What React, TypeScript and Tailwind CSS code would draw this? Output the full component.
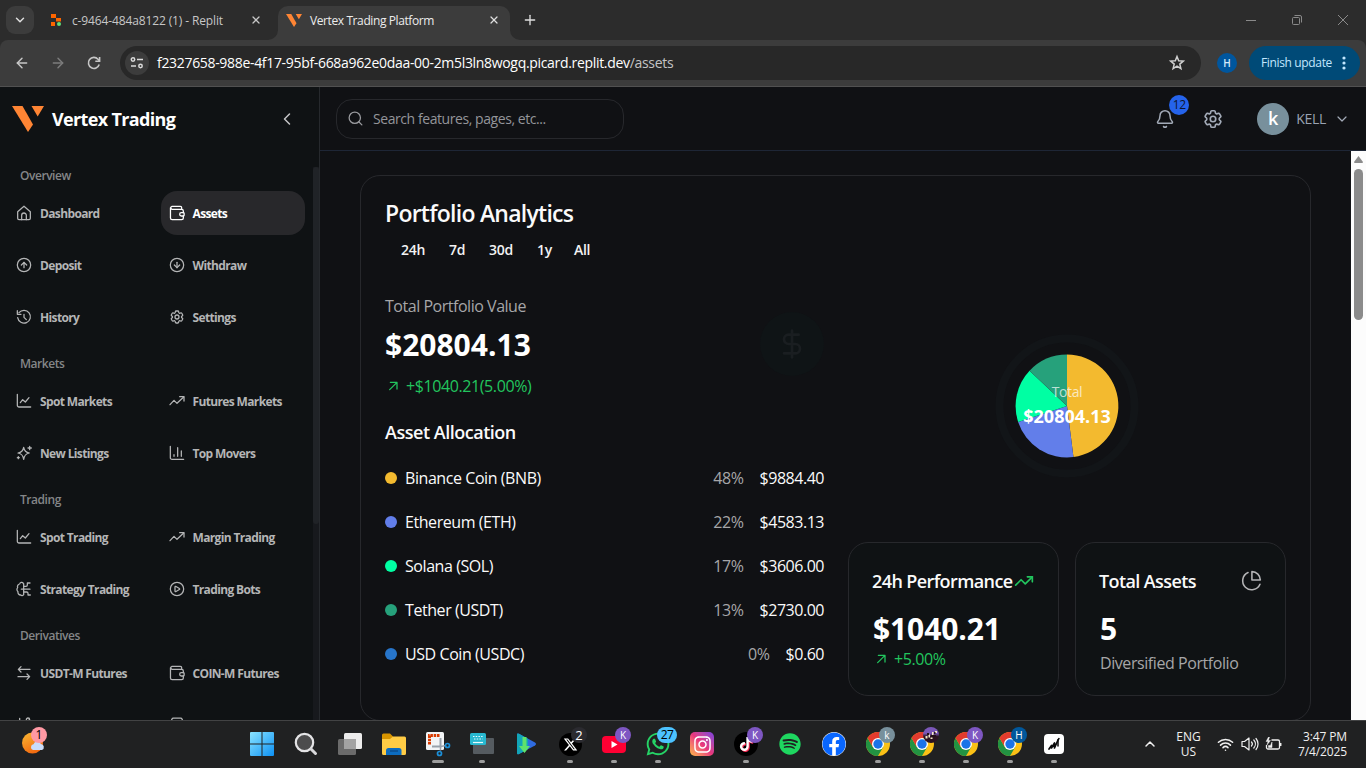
import type { ReactNode } from "react";
import {
  ArrowLeft,
  ArrowRight,
  Bell,
  ChevronDown,
  ChevronLeft,
  ChevronUp,
  CircleArrowDown,
  CircleArrowUp,
  CirclePlay,
  DollarSign,
  Plus,
  Search,
  TrendingUp,
  Wifi,
  X,
} from "lucide-react";
import { FaInstagram, FaSpotify, FaTiktok, FaWhatsapp, FaFacebook } from "react-icons/fa";
import { FaXTwitter } from "react-icons/fa6";
import { HiOutlineCog6Tooth } from "react-icons/hi2";

/* ---------- small line icons ---------- */

function Line({ children, size = 16, sw = 1.9 }: { children: ReactNode; size?: number; sw?: number }) {
  return (
    <svg width={size} height={size} viewBox="0 0 24 24" fill="none" stroke="currentColor" strokeWidth={sw} strokeLinecap="round" strokeLinejoin="round" className="shrink-0">
      {children}
    </svg>
  );
}
const HomeIcon = () => (
  <Line>
    <path d="M2.500 10 12 1.800l9.500 8.200V20a2 2 0 0 1-2 2h-15a2 2 0 0 1-2-2Z" />
    <path d="M8.500 22v-6.500a3.500 3.500 0 0 1 7 0V22" />
  </Line>
);
const WalletIcon = () => (
  <Line>
    <path d="M21.500 11.500V9a2.500 2.500 0 0 0-2.500-2.500H4.500A2.300 2.300 0 0 1 4.500 2H17a2 2 0 0 1 2 2v2.500" />
    <path d="M2.200 4.300V19.500A2.500 2.500 0 0 0 4.700 22H19a2.500 2.500 0 0 0 2.500-2.500v-3" />
    <path d="M21.500 11.500h-3a2.500 2.500 0 0 0 0 5h3a1.200 1.200 0 0 0 1.200-1.200v-2.600a1.200 1.200 0 0 0-1.200-1.200Z" />
  </Line>
);
const HistoryIcon = () => (
  <Line>
    <path d="M4.500 5.500A9.600 9.600 0 1 1 2.500 13" />
    <path d="M2 2.500v5.500h5.500" />
    <path d="M12 8v4.500l3.500 3.500" />
  </Line>
);
const LineChartIcon = () => (
  <Line>
    <path d="M2 2v16.500A2.500 2.500 0 0 0 4.500 21H22" />
    <path d="M6.500 14.500 10 10l4 3.500L19.500 7" />
  </Line>
);
const TrendIcon = () => (
  <Line>
    <path d="M1.500 17.500 7.500 11l4.500 4.500L22 6" />
    <path d="M16 5.500h6.500V12" />
  </Line>
);
const SparkIcon = () => (
  <Line>
    <path d="M11.500 3.500c1 5.500 3 7.500 8.500 8.500-5.500 1-7.500 3-8.500 9.500C10.500 15 8.500 13 3 12c5.500-1 7.500-3 8.500-8.500Z" />
    <path d="M20.500 2v5M18 4.500h5M3.500 17.500v3M2 19h3" />
  </Line>
);
const BarsIcon = () => (
  <Line>
    <path d="M2 2v17a2.500 2.500 0 0 0 2.500 2.500H22" />
    <path d="M7.500 17v-2.500M13 17V4M18.500 17V9" />
  </Line>
);
const BrainIcon = () => (
  <Line>
    <path d="M11 3.500A3 3 0 0 0 5.500 4.500 4 4 0 0 0 2.500 10a4 4 0 0 0 .500 6A4 4 0 0 0 7 21 3 3 0 0 0 11.500 20.500V4" />
    <path d="M11.500 8H15a2 2 0 0 0 2-2V3h4M8 12.200H21M11.500 16.500H16a2 2 0 0 1 2 2V21h3.500" />
  </Line>
);
const SwapIcon = () => (
  <Line>
    <path d="M21 6.500H4M7.500 2.500 3.500 6.500l4 4M3 17.500h17M16.500 13.500l4 4-4 4" />
  </Line>
);
const PieIcon = () => (
  <Line size={22} sw={1.7}>
    <path d="M13 1.800v9.200h9.200A9.200 9.200 0 0 0 13 1.800Z" />
    <path d="M8.800 2.800A9.800 9.800 0 1 0 21.800 15.500" />
  </Line>
);
const PercentIcon = () => (
  <Line>
    <path d="M4 20 20 4M5.500 2v4" />
    <circle cx="18" cy="4" r="2.500" />
  </Line>
);
const ShieldIcon = () => (
  <Line>
    <path d="M2.500 8 4.500 3Q5 1.800 6.500 1.800h11q1.500 0 2 1.200L21.500 8 12 22Z" />
  </Line>
);
const VLogo = ({ w, h }: { w: number; h: number }) => (
  <svg width={w} height={h} viewBox="0 0 32 26" preserveAspectRatio="none" fill="#ff8534" className="shrink-0">
    <path d="M0 0h10.500L21 18.500 16 26Z" />
    <path d="M19.500 0H32l-6.300 10.500Z" />
  </svg>
);

/* ---------- browser chrome ---------- */

function Browser() {
  return (
    <header className="h-[87px] shrink-0 bg-[#2c2c2c] text-[#dfdfdf]">
      <div className="flex h-10 items-start">
        <div className="mt-[6px] ml-[6px] flex size-7 items-center justify-center rounded-[9px] bg-[#3c3c3c]">
          <ChevronDown size={14} strokeWidth={2.5} />
        </div>
        <div className="flex h-10 w-[234px] items-center pl-[16px]">
          <svg width="12" height="12" viewBox="0 0 12 12" className="shrink-0">
            <path d="M1 0h5v4H1zM6 4h5v3.500H6zM1 8h4v4H1z" fill="#fc6500" />
            <circle cx="9" cy="10" r="2" fill="#5fe07a" />
          </svg>
          <span className="ml-[10px] w-[178px] pt-px text-xs tracking-[-0.13px] whitespace-nowrap text-[#c7c7c7]">c-9464-484a8122 (1) - Replit</span>
          <X size={12} strokeWidth={2.5} className="shrink-0 text-[#c7c7c7]" />
        </div>
        <svg width="10" height="10" viewBox="0 0 10 10" className="mt-[30px] shrink-0" fill="#3c3c3c">
          <path d="M10 0v10H0A10 10 0 0 0 10 0Z" />
        </svg>
        <div className="mt-[6px] flex h-[34px] w-[232px] items-center rounded-t-[10px] bg-[#3c3c3c] pb-[6px] pl-[8px]">
          <VLogo w={16} h={13} />
          <span className="ml-[8px] w-[178px] pt-px text-xs tracking-[-0.4px] whitespace-nowrap text-[#ececec]">Vertex Trading Platform</span>
          <X size={12} strokeWidth={2.5} className="shrink-0" />
        </div>
        <svg width="10" height="10" viewBox="0 0 10 10" className="mt-[30px] shrink-0" fill="#3c3c3c">
          <path d="M0 0v10h10A10 10 0 0 1 0 0Z" />
        </svg>
        <div className="flex h-10 items-center pl-[2px]">
          <Plus size={16} strokeWidth={2} />
        </div>
        <div className="mr-[18px] ml-auto flex h-10 items-center gap-[36px] text-[#8a8a8a]">
          <span className="h-px w-[10px] bg-[#8a8a8a]" />
          <svg width="10" height="10" viewBox="0 0 10 10" fill="none" stroke="currentColor">
            <rect x=".5" y="2.500" width="7" height="7" rx="1" />
            <path d="M2.500.5H8A1.500 1.500 0 0 1 9.500 2v5.500" />
          </svg>
          <svg width="10" height="10" viewBox="0 0 10 10" fill="none" stroke="currentColor">
            <path d="m0 0 10 10M10 0 0 10" />
          </svg>
        </div>
      </div>
      <div className="flex h-[47px] items-center rounded-t-[8px] border-b border-[#515151] bg-[#3c3c3c] pr-[6px] pl-[14px]">
        <ArrowLeft size={16} strokeWidth={2.2} className="text-[#c7c7c7]" />
        <ArrowRight size={16} strokeWidth={2.2} className="ml-[20px] text-[#7c7c7c]" />
        <svg width="16" height="16" viewBox="0 0 16 16" fill="none" stroke="#c7c7c7" strokeWidth="1.600" className="ml-[20px]">
          <path d="M13.200 9.500A5.500 5.500 0 1 1 12 4.200L13.500 6" />
          <path d="M13.600 2v4.300H9.300" />
        </svg>
        <div className="ml-[18px] flex h-[34px] w-[1081px] items-center rounded-full bg-[#282828] pr-[15px] pl-[5px]">
          <span className="flex size-6 items-center justify-center rounded-full bg-[#3c3c3c]">
            <svg width="14" height="14" viewBox="0 0 14 14" fill="none" stroke="#dadada" strokeWidth="1.500">
              <circle cx="3" cy="3.500" r="1.700" />
              <path d="M7 3.500h6M1 10h5" />
              <circle cx="10.500" cy="10" r="1.700" />
            </svg>
          </span>
          <span className="ml-2 text-sm tracking-[-0.32px] whitespace-nowrap text-white">
            f2327658-988e-4f17-95bf-668a962e0daa-00-2m5l3ln8wogq.picard.replit.dev<span className="text-[#c4c4c4]">/assets</span>
          </span>
          <svg width="18" height="18" viewBox="0 0 18 18" fill="none" stroke="#d0d0d0" strokeWidth="1.500" className="ml-auto">
            <path d="m9 2.500 1.700 4.300 4.600.3-3.500 3 1.100 4.500L9 12.200l-3.900 2.400 1.100-4.500-3.500-3 4.600-.3Z" />
          </svg>
        </div>
        <span className="ml-[16px] flex size-5 items-center justify-center rounded-full bg-[#00569e] text-[10px] font-semibold text-[#d5e9fa]">H</span>
        <div className="ml-[12px] flex h-[34px] w-[111px] items-center rounded-full bg-[#004a77] pl-[12px] text-[#c2e7ff]">
          <span className="w-[81px] text-xs tracking-[-0.35px] whitespace-nowrap">Finish update</span>
          <svg width="4" height="14" viewBox="0 0 4 14" fill="currentColor">
            <circle cx="2" cy="2" r="1.600" />
            <circle cx="2" cy="7" r="1.600" />
            <circle cx="2" cy="12" r="1.600" />
          </svg>
        </div>
      </div>
    </header>
  );
}

/* ---------- sidebar ---------- */

const small = "size-4 shrink-0";
const sections: { title: string; items: [ReactNode, string][] }[] = [
  {
    title: "Overview",
    items: [
      [<HomeIcon />, "Dashboard"],
      [<WalletIcon />, "Assets"],
      [<CircleArrowUp className={small} strokeWidth={1.9} />, "Deposit"],
      [<CircleArrowDown className={small} strokeWidth={1.9} />, "Withdraw"],
      [<HistoryIcon />, "History"],
      [<HiOutlineCog6Tooth className={small} strokeWidth={1.9} />, "Settings"],
    ],
  },
  {
    title: "Markets",
    items: [
      [<LineChartIcon />, "Spot Markets"],
      [<TrendIcon />, "Futures Markets"],
      [<SparkIcon />, "New Listings"],
      [<BarsIcon />, "Top Movers"],
    ],
  },
  {
    title: "Trading",
    items: [
      [<LineChartIcon />, "Spot Trading"],
      [<TrendIcon />, "Margin Trading"],
      [<BrainIcon />, "Strategy Trading"],
      [<CirclePlay className={small} strokeWidth={1.9} />, "Trading Bots"],
    ],
  },
  {
    title: "Derivatives",
    items: [
      [<SwapIcon />, "USDT-M Futures"],
      [<WalletIcon />, "COIN-M Futures"],
      [<PercentIcon />, ""],
      [<ShieldIcon />, ""],
    ],
  },
];

function Sidebar() {
  return (
    <aside className="flex w-80 shrink-0 flex-col border-r border-[#26292d] bg-[#0f1214]">
      <div className="flex h-16 shrink-0 items-center pr-[22px] pl-3">
        <VLogo w={32} h={26} />
        <span className="ml-2 pt-px text-[18px] font-bold tracking-[-0.65px] whitespace-nowrap text-white">Vertex Trading</span>
        <ChevronLeft size={20} strokeWidth={1.8} className="ml-auto text-[#c4c4c6]" />
      </div>
      <div className="mt-4 flex min-h-0 flex-1 overflow-hidden">
        <nav className="flex w-[313px] flex-col gap-4 pr-2 pl-2">
          {sections.map((s) => (
            <section key={s.title} className="flex shrink-0 flex-col gap-2">
              <h3 className="h-4 pt-px pl-3 text-xs leading-4 font-semibold tracking-[-0.45px] text-[#848688]">{s.title}</h3>
              <div className="grid grid-cols-2 gap-2">
                {s.items.map(([icon, label], i) => (
                  <a
                    key={i}
                    className={
                      label === "Assets"
                        ? "flex h-11 items-center gap-2 rounded-2xl bg-[#28282b] px-2 text-white"
                        : "flex h-11 items-center gap-2 rounded-2xl px-2 text-[#b4b5b6]"
                    }
                  >
                    {icon}
                    <span className="pt-[2px] text-xs font-bold tracking-[-0.64px] whitespace-nowrap">{label}</span>
                  </a>
                ))}
              </div>
            </section>
          ))}
        </nav>
        <div className="w-[6px] bg-[#17191d]">
          <div className="h-[357px] rounded-full bg-[#202327]" />
        </div>
      </div>
    </aside>
  );
}

/* ---------- main ---------- */

function TopBar() {
  return (
    <div className="flex h-16 shrink-0 items-center border-b border-[#1e2636] pr-[16px] pl-4">
      <div className="flex h-10 w-72 items-center rounded-2xl border border-[#27282c] pl-[10px]">
        <Search size={17} strokeWidth={1.8} className="text-[#9a9b9f]" />
        <span className="ml-[9px] pt-px text-sm tracking-[-0.43px] whitespace-nowrap text-[#94959a]">Search features, pages, etc...</span>
      </div>
      <div className="relative ml-auto text-[#a3abb8]">
        <Bell size={20} strokeWidth={1.8} />
        <span className="absolute -top-[14px] left-[14px] flex size-5 items-center justify-center rounded-full bg-[#2563eb] text-xs tracking-[-0.3px] text-[#0c1530]">12</span>
      </div>
      <HiOutlineCog6Tooth className="ml-[27px] size-[22px] text-[#a3abb8]" strokeWidth={1.8} />
      <span className="ml-[33px] flex size-8 items-center justify-center rounded-full bg-[#78909c] text-[18px] font-semibold text-white">k</span>
      <span className="ml-[7px] text-sm tracking-[-0.3px] text-[#9aa3b2]">KELL</span>
      <ChevronDown size={16} strokeWidth={1.8} className="ml-[8px] text-[#a3abb8]" />
    </div>
  );
}

const assets = [
  { name: "Binance Coin (BNB)", pct: 48, value: "$9884.40", dot: "bg-[#f3ba2f]", color: "#f3ba2f" },
  { name: "Ethereum (ETH)", pct: 22, value: "$4583.13", dot: "bg-[#627eea]", color: "#627eea" },
  { name: "Solana (SOL)", pct: 17, value: "$3606.00", dot: "bg-[#00ffa3]", color: "#00ffa3" },
  { name: "Tether (USDT)", pct: 13, value: "$2730.00", dot: "bg-[#26a17b]", color: "#26a17b" },
  { name: "USD Coin (USDC)", pct: 0, value: "$0.60", dot: "bg-[#2775ca]", color: "#2775ca" },
];

const ranges: [string, string][] = [
  ["24h", "w-6"],
  ["7d", "w-4"],
  ["30d", "w-6"],
  ["1y", "w-[13px]"],
  ["All", "w-[17px]"],
];

function Pie() {
  let acc = 0;
  const at = (p: number) => {
    const a = (p / 100) * Math.PI * 2;
    return `${(72 + 51.4 * Math.sin(a)).toFixed(2)} ${(72 - 51.4 * Math.cos(a)).toFixed(2)}`;
  };
  return (
    <div className="relative size-36">
      <svg width="144" height="144" viewBox="0 0 144 144">
        <circle cx="72" cy="72" r="67.500" fill="none" stroke="#121518" strokeWidth="8" />
        {assets
          .filter((a) => a.pct > 0)
          .map((a) => {
            const start = acc;
            acc += a.pct;
            return <path key={a.name} d={`M72 72L${at(start)}A51.4 51.4 0 0 1 ${at(acc)}Z`} fill={a.color} />;
          })}
      </svg>
      <div className="absolute inset-0 flex flex-col items-center justify-center whitespace-nowrap">
        <span className="text-sm leading-5 tracking-[-0.4px] text-white/70">Total</span>
        <span className="text-[18px] leading-7 font-bold text-white">$20804.13</span>
      </div>
    </div>
  );
}

function Change({ children }: { children: ReactNode }) {
  return (
    <div className="flex h-6 items-center text-[#22c55e]">
      <Line size={16} sw={1.9}>
        <path d="M7 17.500 18 6.500M8 6.500H18v10" />
      </Line>
      <span className="ml-[5px] text-base leading-6 tracking-[-0.4px]">{children}</span>
    </div>
  );
}

function Stat({ title, icon, children }: { title: string; icon: ReactNode; children: ReactNode }) {
  return (
    <div className="h-[154px] rounded-[20px] border border-[#27282c] bg-[#0f1214] px-6 pt-6">
      <div className="flex h-7 items-center justify-between">
        <h4 className="-ml-px text-[18px] leading-7 font-semibold tracking-[-0.6px] whitespace-nowrap text-[#fafafa]">{title}</h4>
        {icon}
      </div>
      {children}
    </div>
  );
}

function Portfolio() {
  return (
    <section className="h-[546px] w-[951px] shrink-0 rounded-[20px] border border-[#27282c] px-6 pt-[23px]">
      <h1 className="text-[23px] leading-7 font-semibold tracking-[-0.75px] text-[#fafafa]">Portfolio Analytics</h1>
      <div className="mt-2 flex h-7 items-center gap-6 pl-4 text-[14px] font-semibold tracking-[-0.3px] whitespace-nowrap text-[#f2f2f3]">
        {ranges.map(([t, w]) => (
          <span key={t} className={w}>
            {t}
          </span>
        ))}
      </div>
      <div className="mt-[31px] grid grid-cols-[439px_438px] gap-x-6">
        <div>
          <div className="flex items-center justify-between">
            <div>
              <p className="h-6 text-base leading-6 tracking-[-0.47px] text-[#a6a6a8]">Total Portfolio Value</p>
              <p className="mt-2 h-9 pt-px text-[30px] leading-9 font-bold text-white">$20804.13</p>
              <div className="mt-3">
                <Change>+$1040.21(5.00%)</Change>
              </div>
            </div>
            <div className="mb-1 flex size-16 items-center justify-center rounded-full bg-[#0f1416] text-[#1a1e21]">
              <DollarSign size={32} strokeWidth={2} />
            </div>
          </div>
          <h2 className="mt-5 h-7 text-[18px] leading-[29px] font-semibold tracking-[-0.48px] text-[#fafafa]">Asset Allocation</h2>
          <ul className="mt-5 flex flex-col gap-5 text-base leading-6 text-[#fafafa]">
            {assets.map((a) => (
              <li key={a.name} className="flex h-6 items-center">
                <span className={`size-3 rounded-full ${a.dot}`} />
                <span className="ml-2 tracking-[-0.43px]">{a.name}</span>
                <span className="mr-4 ml-auto tracking-[-0.4px] text-[#a6a6a8]">{a.pct}%</span>
                <span className="tracking-[-0.48px]">{a.value}</span>
              </li>
            ))}
          </ul>
        </div>
        <div className="flex h-[402px] flex-col">
          <div className="mt-[40px] flex justify-center">
            <Pie />
          </div>
          <div className="mt-auto grid grid-cols-2 gap-4">
            <Stat title="24h Performance" icon={<TrendingUp size={20} strokeWidth={2} className="shrink-0 text-[#22c55e]" />}>
              <p className="mt-4 text-[30px] leading-9 font-bold tracking-[-0.1px] text-white">$1040.21</p>
              <Change>+5.00%</Change>
            </Stat>
            <Stat title="Total Assets" icon={<span className="-mr-px text-[#b4b4b6]"><PieIcon /></span>}>
              <p className="mt-4 text-[30px] leading-9 font-bold text-white">5</p>
              <p className="mt-1 text-base leading-6 tracking-[-0.43px] whitespace-nowrap text-[#a6a6a8]">Diversified Portfolio</p>
            </Stat>
          </div>
        </div>
      </div>
    </section>
  );
}

/* ---------- taskbar ---------- */

function Badge({ children, tone }: { children: ReactNode; tone: string }) {
  return <span className={`absolute z-10 flex items-center justify-center rounded-full leading-none ${tone}`}>{children}</span>;
}

function Task({ children, run = "" }: { children: ReactNode; run?: "" | "open" | "active" }) {
  return (
    <div className="relative flex h-[46px] w-11 items-center justify-center">
      {children}
      {run === "open" && <span className="absolute bottom-[4px] h-[3px] w-[6px] rounded-full bg-[#9d9d9d]" />}
      {run === "active" && <span className="absolute bottom-[4px] h-[3px] w-[12px] rounded-full bg-[#9d9d9d]" />}
    </div>
  );
}

const Chrome = () => (
  <svg width="24" height="24" viewBox="0 0 24 24">
    <circle cx="12" cy="12" r="12" fill="#fbc116" />
    <path d="M1.600 6A12 12 0 0 0 12 24l5.200-9L12 12 6.800 15Z" fill="#229342" />
    <path d="M1.600 6A12 12 0 0 1 22.400 6H12L6.800 15Z" fill="#e33b2e" />
    <circle cx="12" cy="12" r="6" fill="#fff" />
    <circle cx="12" cy="12" r="4.700" fill="#1a73e8" />
  </svg>
);

const corner = "top-[6px] left-[23px] size-4 text-[10px] text-white";

function Taskbar() {
  return (
    <footer className="flex h-12 shrink-0 border-t border-[#424344] bg-[#202122] text-white">
      <div className="relative w-[240px]">
        <svg width="24" height="24" viewBox="0 0 24 24" className="mt-[10px] ml-[22px]">
          <defs>
            <linearGradient id="sun" x1="0" y1="0" x2=".5" y2="1">
              <stop offset="0" stopColor="#f9b934" />
              <stop offset="1" stopColor="#f26a10" />
            </linearGradient>
          </defs>
          <circle cx="10.500" cy="12" r="10.500" fill="url(#sun)" />
          <path d="M11 19a3 3 0 0 1 .5-5.800 4 4 0 0 1 7.400-.3A3.200 3.200 0 0 1 20 19Z" fill="#c9dcfa" />
        </svg>
        <Badge tone="top-[6px] left-[31px] size-4 bg-[#ff99a4] text-xs text-black">1</Badge>
      </div>
      <Task>
        <svg width="24" height="24" viewBox="0 0 24 24" className="mr-px">
          <defs>
            <linearGradient id="win" x1="0" y1="0" x2="1" y2="1">
              <stop offset="0" stopColor="#8ae4ff" />
              <stop offset="1" stopColor="#0d91f5" />
            </linearGradient>
          </defs>
          <path d="M0 1a1 1 0 0 1 1-1h10.500v11.500H0ZM12.500 0H23a1 1 0 0 1 1 1v10.500H12.500ZM0 12.500h11.500V24H1a1 1 0 0 1-1-1ZM12.500 12.500H24V23a1 1 0 0 1-1 1H12.500Z" fill="url(#win)" />
        </svg>
      </Task>
      <Task>
        <svg width="24" height="24" viewBox="0 0 24 24" fill="none">
          <circle cx="10.500" cy="10.500" r="8.700" fill="#4c4c4d" stroke="#e4e4e6" strokeWidth="2.200" />
          <path d="m17 17 4.500 4.500" stroke="#d8d8da" strokeWidth="3" strokeLinecap="round" />
        </svg>
      </Task>
      <Task>
        <svg width="24" height="24" viewBox="0 0 24 24">
          <rect x="6" y="1" width="18" height="16" rx="1.500" fill="#ececec" />
          <rect x="0" y="7" width="18" height="16" rx="1.500" fill="#6b6b6b" />
          <path d="M6 7h12v10H6Z" fill="#a3a3a3" />
        </svg>
      </Task>
      <Task>
        <svg width="24" height="24" viewBox="0 0 24 24">
          <path d="M0 3a1.500 1.500 0 0 1 1.500-1.500H8L11 4.500V9H0Z" fill="#d89500" />
          <path d="M0 7h8l3-2.500h11.500A1.500 1.500 0 0 1 24 6v15.500a1.500 1.500 0 0 1-1.500 1.500h-21A1.500 1.500 0 0 1 0 21.500Z" fill="#ffcc45" />
          <path d="M4 23v-4.500A2.500 2.500 0 0 1 6.500 16h10.500a2.500 2.500 0 0 1 2.500 2.500V23Z" fill="#0c6cc0" />
          <path d="M8 19h8" stroke="#0a4d8f" strokeWidth="1.500" />
        </svg>
      </Task>
      <Task run="active">
        <svg width="25" height="25" viewBox="0 0 25 25" className="shrink-0">
          <rect x="0" y="0" width="18" height="18" rx="1.500" fill="#f2f4f6" />
          <path d="M3.500 12.500v-9h10" fill="none" stroke="#d83b01" strokeWidth="3" strokeDasharray="2.500 .8" />
          <path d="M14.500 6v8.500H6" fill="none" stroke="#98a1ab" strokeWidth="2" />
          <path d="m14.500 14.500 5.500-1M14.500 14.500v4" fill="none" stroke="#98a1ab" strokeWidth="1.500" />
          <circle cx="21.500" cy="13.500" r="2" fill="none" stroke="#1b8fd8" strokeWidth="1.700" />
          <circle cx="13.500" cy="21.500" r="2" fill="none" stroke="#1b8fd8" strokeWidth="1.700" />
        </svg>
      </Task>
      <Task run="open">
        <svg width="24" height="24" viewBox="0 0 24 24">
          <rect x="3" y="6" width="21" height="16" rx="1" fill="#555b60" />
          <rect x="0" y="1" width="16" height="12" rx="1.500" fill="#28b8d0" />
          <path d="M3 4.500h10.500M4 7h8.500" stroke="#e8fbff" strokeWidth="1.200" strokeDasharray="1.500 1.200" />
          <path d="M3 10.500h10" stroke="#e8fbff" strokeWidth="1.200" />
        </svg>
      </Task>
      <Task>
        <svg width="22" height="22" viewBox="0 0 22 22">
          <path d="M2 1.500Q2 0 4 .8L20 9.500q2 1.500 0 3L4 21q-2 1-2-1Z" fill="#2f6be0" />
          <path d="M2 1.500Q2 0 4 .8L13 6v10L4 21q-2 1-2-1Z" fill="#12a5b8" />
          <path d="M7.500 4h4v9H15L9.500 20 4 13h3.500Z" fill="#5fe36c" />
        </svg>
      </Task>
      <Task run="open">
        <span className="flex size-[23px] items-center justify-center rounded-full bg-black">
          <FaXTwitter size={15} />
        </span>
        <Badge tone="top-[6px] left-[23px] size-4 bg-[#2b2b30] text-[13px] text-white">2</Badge>
      </Task>
      <Task run="open">
        <svg width="24" height="17" viewBox="0 0 24 17">
          <rect width="24" height="17" rx="4" fill="#ff0033" />
          <path d="M9.500 5v7l6-3.500Z" fill="#fff" />
        </svg>
        <Badge tone="top-[6px] left-[23px] size-4 bg-[#7e57c2] text-[10px] text-white">K</Badge>
      </Task>
      <Task run="open">
        <FaWhatsapp size={26} className="text-[#25d366]" />
        <Badge tone="top-[6px] left-[21px] h-4 w-[20px] bg-[#4cc2ff] text-[12px] tracking-[-0.6px] text-black">27</Badge>
      </Task>
      <Task>
        <span className="flex size-6 items-center justify-center rounded-[5px] bg-linear-to-bl from-[#7a3ae0] via-[#e8347c] to-[#fdb63c]">
          <FaInstagram size={19} />
        </span>
      </Task>
      <Task run="open">
        <span className="flex size-6 items-center justify-center rounded-full bg-black">
          <FaTiktok size={14} className="drop-shadow-[1px_1px_0_#fe2c55]" />
        </span>
        <Badge tone="top-[6px] left-[23px] size-4 bg-[#7e57c2] text-[10px] text-white">K</Badge>
      </Task>
      <Task>
        <FaSpotify size={22} className="text-[#1ed760]" />
      </Task>
      <Task>
        <FaFacebook size={24} className="rounded-full bg-white text-[#0866ff]" />
      </Task>
      <Task run="open">
        <Chrome />
        <Badge tone={`bg-[#78909c] ${corner}`}>k</Badge>
      </Task>
      <Task run="open">
        <Chrome />
        <Badge tone={`bg-linear-to-b from-[#7a57b8] from-40% to-[#2a1220] to-60% ${corner}`}>
          <svg width="16" height="16" viewBox="0 0 16 16">
            <path d="M2.500 9h2v2.500h-2ZM5.500 7.500h1.500v3H5.500ZM9 5h1.500v3H9ZM12 4h2v2h-2ZM7.500 10.500h2V12h-2Z" fill="#f4e7c8" />
            <path d="M4 6h2v2H4ZM8 8h5v2H8ZM11 5h1.500v2H11Z" fill="#241018" />
          </svg>
        </Badge>
      </Task>
      <Task run="open">
        <Chrome />
        <Badge tone={`bg-[#7e57c2] ${corner}`}>K</Badge>
      </Task>
      <Task run="open">
        <Chrome />
        <Badge tone={`bg-[#01579b] ${corner}`}>H</Badge>
      </Task>
      <Task run="open">
        <span className="flex size-5 items-center justify-center rounded-[4px] bg-white">
          <svg width="14" height="14" viewBox="0 0 14 14" fill="none" stroke="#0a0a0a" strokeLinecap="round" strokeLinejoin="round">
            <path d="M2 12 4.500 8.500V11L7.500 6v5L11 3" strokeWidth="1.700" />
            <path d="M11 3v6M12 1.500 11 3" strokeWidth="1.500" />
          </svg>
        </span>
      </Task>
      <div className="ml-auto flex h-[46px] items-center pr-[19px] text-xs leading-[15px] text-[#f0f0f0]">
        <ChevronUp size={16} strokeWidth={2.2} />
        <div className="ml-[17px] w-[27px] text-center">
          ENG
          <br />
          US
        </div>
        <Wifi size={17} strokeWidth={2.2} className="ml-[15px]" />
        <svg width="18" height="16" viewBox="0 0 18 16" fill="none" stroke="currentColor" strokeWidth="1.200" strokeLinecap="round" strokeLinejoin="round" className="ml-[7px]">
          <path d="M1 5.500h2.500L8 2v12l-4.500-3.500H1Z" />
          <path d="M10.500 6a3 3 0 0 1 0 4M12.800 4a6 6 0 0 1 0 8M15 2.500a8.500 8.500 0 0 1 0 11" />
        </svg>
        <svg width="17" height="14" viewBox="0 0 17 14" fill="none" stroke="currentColor" strokeWidth="1.300" className="ml-[6px]">
          <path d="M6.500 3H13a1.500 1.500 0 0 1 1.500 1.500v6A1.500 1.500 0 0 1 13 12H3a1.500 1.500 0 0 1-1.500-1.500V8M15.800 6v3" />
          <path d="M3.500 8.500h2L7 5v5.500H3.500Z" fill="currentColor" strokeWidth=".5" />
          <path d="M3.500 0 1 4.500h2L2 8l3.500-4.500h-2L4.500 0Z" fill="currentColor" strokeWidth=".4" />
        </svg>
        <div className="ml-[15px] w-[50px] text-right tracking-[-0.12px] whitespace-nowrap">
          3:47 PM
          <br />
          7/4/2025
        </div>
      </div>
    </footer>
  );
}

export default function App() {
  return (
    <div className="flex h-[768px] w-[1366px] flex-col overflow-hidden bg-[#101114] font-['Open_Sans','Noto_Sans',sans-serif]">
      <Browser />
      <div className="flex min-h-0 flex-1 overflow-hidden">
        <Sidebar />
        <main className="flex min-w-0 flex-1 flex-col bg-[#101114]">
          <TopBar />
          <div className="flex min-h-0 flex-1">
            <div className="flex flex-1 overflow-hidden pt-6 pl-10">
              <Portfolio />
            </div>
            <div className="flex w-[15px] flex-col items-center bg-[#fcfcfc] pt-[5px]">
              <svg width="9" height="7" viewBox="0 0 9 7" fill="#8b8b8b">
                <path d="M4.500 0 9 6a1 1 0 0 1-1 1H1A1 1 0 0 1 0 6Z" />
              </svg>
              <div className="mt-[6px] h-[151px] w-[9px] rounded-full bg-[#8b8b8b]" />
            </div>
          </div>
        </main>
      </div>
      <Taskbar />
    </div>
  );
}
